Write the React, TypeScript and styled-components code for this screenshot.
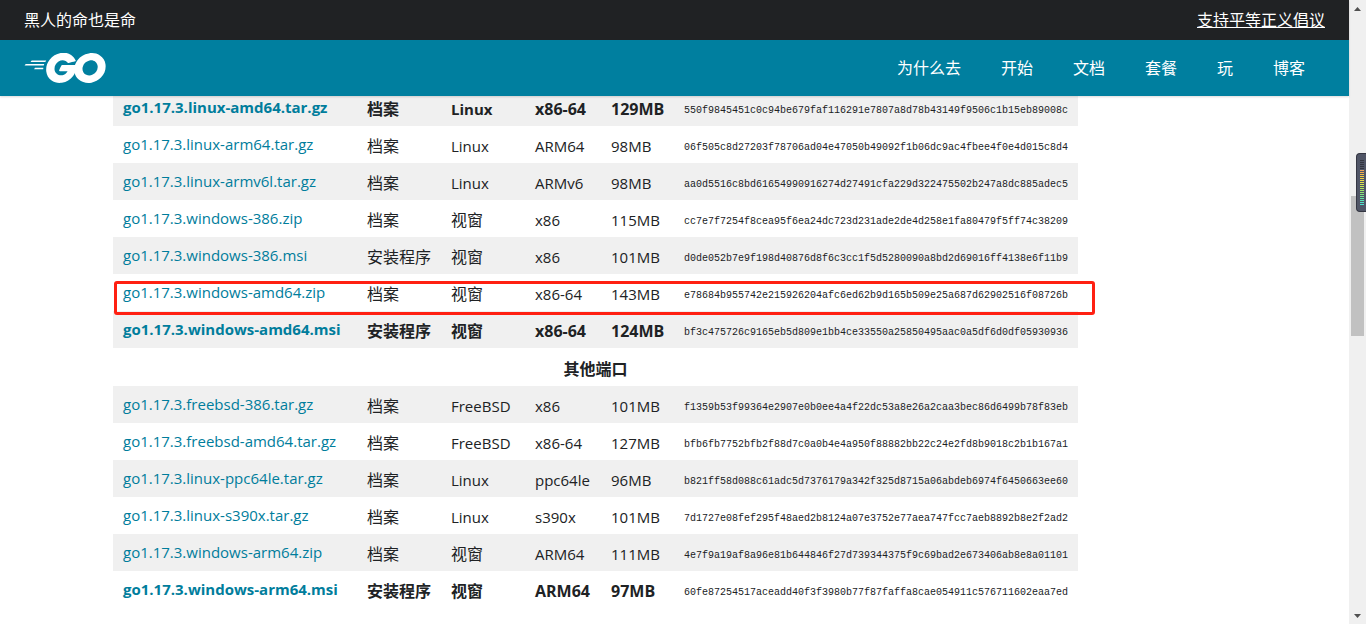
import React from "react";
import styled, { createGlobalStyle } from "styled-components";

const GlobalStyle = createGlobalStyle`
  *, *::before, *::after { box-sizing: border-box; }
  body {
    margin: 0;
    background: #fff;
    color: #202224;
    font: 16px/24px "Open Sans", "Noto Sans CJK SC", sans-serif;
  }
`;

const Shell = styled.div`
  display: flex;
  height: 100vh;
  overflow: hidden;
`;

const Page = styled.div`
  flex: 1;
  min-width: 0;
`;

const Header = styled.header`
  position: relative;
  z-index: 1;
  color: #fff;
  box-shadow: 0 1px 2px rgba(0, 0, 0, 0.15);
`;

const Banner = styled.div`
  display: flex;
  align-items: center;
  justify-content: space-between;
  height: 40px;
  padding: 0 24px;
  background: #202224;
`;

const BannerLink = styled.a`
  color: inherit;
  text-decoration: underline;
`;

const NavBar = styled.nav`
  display: flex;
  align-items: center;
  justify-content: space-between;
  height: 56px;
  padding: 0 24px;
  background: #007f9f;
`;

const HomeLink = styled.a`
  display: flex;
`;

const Menu = styled.ul`
  display: flex;
  margin: 0;
  padding: 0;
  list-style: none;
`;

const MenuLink = styled.a`
  padding: 0 20px;
  color: #fff;
  text-decoration: none;
`;

const Main = styled.main`
  max-width: 1123px;
  margin: 0 auto;
`;

/* Scrolled so that the first visible row is partly under the header. */
const Downloads = styled.table`
  width: 100%;
  max-width: 965px;
  margin-top: -7px;
  border-collapse: collapse;
  table-layout: fixed;
`;

const Col = styled.col<{ $w?: number }>`
  width: ${(p) => (p.$w ? `${p.$w}px` : "auto")};
`;

const Row = styled.tr<{ $striped?: boolean; $strong?: boolean }>`
  position: relative;
  height: 37px;
  background: ${(p) => (p.$striped ? "#f0f0f0" : "#fff")};
  font-weight: ${(p) => (p.$strong ? 700 : 400)};
`;

/* Red frame drawn over the whole row; the row is its containing block. */
const Marker = styled.span`
  position: absolute;
  z-index: 1;
  top: 7px;
  left: 1px;
  right: -17px;
  height: 34px;
  border: 3px solid #ff2012;
  border-radius: 3px;
  pointer-events: none;
`;

const Cell = styled.td<{ $large?: boolean }>`
  padding: 8px 0 5px 10px;
  font-size: ${(p) => (p.$large ? 16 : 15)}px;
  vertical-align: top;
  white-space: nowrap;
`;

const FileCell = styled(Cell)`
  padding: 6px 0 7px 10px;
`;

const FileLink = styled.a`
  color: #007d9c;
  text-decoration: none;
`;

const HashCell = styled(Cell)`
  padding: 10px 0 3px 10px;
  font: 10px/24px "Liberation Mono", monospace;
`;

const GroupHead = styled.th`
  height: 38px;
  padding: 9px 0 5px;
  text-align: center;
`;

const ScrollTrack = styled.aside`
  position: relative;
  display: flex;
  flex-direction: column;
  justify-content: space-between;
  align-items: center;
  width: 17px;
  padding: 7px 0 6px;
  background: #f0f0f0;
`;

const ScrollThumb = styled.div`
  position: absolute;
  top: 196px;
  left: 2px;
  width: 13px;
  height: 140px;
  background: #c1c1c1;
`;

const Meter = styled.div`
  position: absolute;
  top: 153px;
  right: 0;
  display: flex;
  flex-direction: column;
  gap: 1px;
  width: 10px;
  height: 59px;
  padding: 6px 1px 0 3px;
  border: 1px solid #343642;
  border-right: 0;
  border-radius: 4px 0 0 4px;
  background: #505566;
`;

const MeterBar = styled.div<{ $color: string }>`
  width: 4px;
  height: 1px;
  background: ${(p) => p.$color};
`;

const menu = ["为什么去", "开始", "文档", "套餐", "玩", "博客"];

type File = {
  name: string;
  kind: string;
  os: string;
  arch: string;
  size: string;
  hash: string;
  strong?: boolean;
  marked?: boolean;
};

const mainFiles: File[] = [
  { name: "go1.17.3.linux-amd64.tar.gz", kind: "档案", os: "Linux", arch: "x86-64", size: "129MB", hash: "550f9845451c0c94be679faf116291e7807a8d78b43149f9506c1b15eb89008c", strong: true },
  { name: "go1.17.3.linux-arm64.tar.gz", kind: "档案", os: "Linux", arch: "ARM64", size: "98MB", hash: "06f505c8d27203f78706ad04e47050b49092f1b06dc9ac4fbee4f0e4d015c8d4" },
  { name: "go1.17.3.linux-armv6l.tar.gz", kind: "档案", os: "Linux", arch: "ARMv6", size: "98MB", hash: "aa0d5516c8bd61654990916274d27491cfa229d322475502b247a8dc885adec5" },
  { name: "go1.17.3.windows-386.zip", kind: "档案", os: "视窗", arch: "x86", size: "115MB", hash: "cc7e7f7254f8cea95f6ea24dc723d231ade2de4d258e1fa80479f5ff74c38209" },
  { name: "go1.17.3.windows-386.msi", kind: "安装程序", os: "视窗", arch: "x86", size: "101MB", hash: "d0de052b7e9f198d40876d8f6c3cc1f5d5280090a8bd2d69016ff4138e6f11b9" },
  { name: "go1.17.3.windows-amd64.zip", kind: "档案", os: "视窗", arch: "x86-64", size: "143MB", hash: "e78684b955742e215926204afc6ed62b9d165b509e25a687d62902516f08726b", marked: true },
  { name: "go1.17.3.windows-amd64.msi", kind: "安装程序", os: "视窗", arch: "x86-64", size: "124MB", hash: "bf3c475726c9165eb5d809e1bb4ce33550a25850495aac0a5df6d0df05930936", strong: true },
];

const otherFiles: File[] = [
  { name: "go1.17.3.freebsd-386.tar.gz", kind: "档案", os: "FreeBSD", arch: "x86", size: "101MB", hash: "f1359b53f99364e2907e0b0ee4a4f22dc53a8e26a2caa3bec86d6499b78f83eb" },
  { name: "go1.17.3.freebsd-amd64.tar.gz", kind: "档案", os: "FreeBSD", arch: "x86-64", size: "127MB", hash: "bfb6fb7752bfb2f88d7c0a0b4e4a950f88882bb22c24e2fd8b9018c2b1b167a1" },
  { name: "go1.17.3.linux-ppc64le.tar.gz", kind: "档案", os: "Linux", arch: "ppc64le", size: "96MB", hash: "b821ff58d088c61adc5d7376179a342f325d8715a06abdeb6974f6450663ee60" },
  { name: "go1.17.3.linux-s390x.tar.gz", kind: "档案", os: "Linux", arch: "s390x", size: "101MB", hash: "7d1727e08fef295f48aed2b8124a07e3752e77aea747fcc7aeb8892b8e2f2ad2" },
  { name: "go1.17.3.windows-arm64.zip", kind: "档案", os: "视窗", arch: "ARM64", size: "111MB", hash: "4e7f9a19af8a96e81b644846f27d739344375f9c69bad2e673406ab8e8a01101" },
  { name: "go1.17.3.windows-arm64.msi", kind: "安装程序", os: "视窗", arch: "ARM64", size: "97MB", hash: "60fe87254517aceadd40f3f3980b77f87faffa8cae054911c576711602eaa7ed", strong: true },
];

const meterColors = [
  "#33353f", "#33353f", "#33353f", "#33353f", "#33353f",
  "#f0a35a", "#f0ac50", "#f2bd48", "#f2c944", "#f0d444", "#ecdc48",
  "#e2e24c", "#d2e650", "#c2e656", "#b0e65e", "#a0e668", "#92e672",
  "#82e680", "#72e690", "#64e6a2", "#58e4b4", "#50e2c4", "#4ce0d0",
];

const GoLogo = () => (
  <svg width="82" height="30" viewBox="23 78.6 208 76" fill="#fff" role="img" aria-label="Go">
    <path d="M40.2,101.1c-0.4,0-0.5-0.2-0.3-0.5l2.1-2.7c0.2-0.3,0.7-0.5,1.1-0.5l35.7,0c0.4,0,0.5,0.3,0.3,0.6l-1.7,2.6c-0.2,0.3-0.7,0.6-1,0.6L40.2,101.1z" />
    <path d="M25.1,110.3c-0.4,0-0.5-0.2-0.3-0.5l2.1-2.7c0.2-0.3,0.7-0.5,1.1-0.5l45.6,0c0.4,0,0.6,0.3,0.5,0.6l-0.8,2.4c-0.1,0.4-0.5,0.6-0.9,0.6L25.1,110.3z" />
    <path d="M49.3,119.5c-0.4,0-0.5-0.3-0.3-0.6l1.4-2.5c0.2-0.3,0.6-0.6,1-0.6l20,0c0.4,0,0.6,0.3,0.6,0.7l-0.2,2.4c0,0.4-0.4,0.7-0.7,0.7L49.3,119.5z" />
    <path d="M153.1,99.3c-6.3,1.6-10.6,2.8-16.8,4.4c-1.5,0.4-1.6,0.5-2.9-1c-1.5-1.7-2.6-2.8-4.7-3.8c-6.3-3.1-12.4-2.2-18.1,1.5c-6.8,4.4-10.3,10.9-10.2,19c0.1,8,5.6,14.6,13.5,15.7c6.8,0.9,12.5-1.5,17-6.6c0.9-1.1,1.7-2.3,2.7-3.7c-3.6,0-8.1,0-19.3,0c-2.1,0-2.6-1.3-1.9-3c1.3-3.1,3.7-8.3,5.1-10.9c0.3-0.6,1-1.6,2.5-1.6c5.1,0,23.9,0,36.4,0c-0.2,2.7-0.2,5.4-0.6,8.1c-1.1,7.2-3.8,13.8-8.2,19.6c-7.2,9.5-16.6,15.4-28.5,17c-9.8,1.3-18.9-0.6-26.9-6.6c-7.4-5.6-11.6-13-12.7-22.2c-1.3-10.9,1.9-20.7,8.5-29.3c7.1-9.3,16.5-15.2,28-17.3c9.4-1.7,18.4-0.6,26.5,4.9c5.3,3.5,9.1,8.3,11.6,14.1C154.7,98.5,154.3,99,153.1,99.3z" />
    <path d="M186.2,154.6c-9.1-0.2-17.4-2.8-24.4-8.8c-5.9-5.1-9.6-11.6-10.8-19.3c-1.8-11.3,1.3-21.3,8.1-30.2c7.3-9.6,16.1-14.6,28-16.7c10.2-1.8,19.8-0.8,28.5,5.1c7.9,5.4,12.8,12.7,14.1,22.3c1.7,13.5-2.2,24.5-11.5,33.9c-6.6,6.7-14.7,10.9-24,12.8C191.5,154.2,188.8,154.3,186.2,154.6z M210,114.2c-0.1-1.3-0.1-2.3-0.3-3.3c-1.8-9.9-10.9-15.5-20.4-13.3c-9.3,2.1-15.3,8-17.5,17.4c-1.8,7.8,2,15.7,9.2,18.9c5.5,2.4,11,2.1,16.3-0.6C205.2,129.2,209.5,122.9,210,114.2z" />
  </svg>
);

const isLatin = (text: string) => /^[A-Z]/.test(text);

const FileRow = ({ file, striped }: { file: File; striped: boolean }) => (
  <Row $striped={striped} $strong={file.strong}>
    <FileCell>
      <FileLink href={`#${file.name}`}>{file.name}</FileLink>
      {file.marked && <Marker />}
    </FileCell>
    <Cell $large>{file.kind}</Cell>
    <Cell $large={!isLatin(file.os)}>{file.os}</Cell>
    <Cell $large={file.strong}>{file.arch}</Cell>
    <Cell $large={file.strong}>{file.size}</Cell>
    <HashCell>{file.hash}</HashCell>
  </Row>
);

export default function App() {
  return (
    <>
      <GlobalStyle />
      <Shell>
        <Page>
          <Header>
            <Banner>
              <span>黑人的命也是命</span>
              <BannerLink href="#support">支持平等正义倡议</BannerLink>
            </Banner>
            <NavBar>
              <HomeLink href="#home">
                <GoLogo />
              </HomeLink>
              <Menu>
                {menu.map((item) => (
                  <li key={item}>
                    <MenuLink href={`#${item}`}>{item}</MenuLink>
                  </li>
                ))}
              </Menu>
            </NavBar>
          </Header>
          <Main>
            <Downloads>
              <colgroup>
                <Col $w={244} />
                <Col $w={84} />
                <Col $w={84} />
                <Col $w={76} />
                <Col $w={73} />
                <Col />
              </colgroup>
              <tbody>
                {mainFiles.map((file, i) => (
                  <FileRow key={file.name} file={file} striped={i % 2 === 0} />
                ))}
                <Row>
                  <GroupHead colSpan={6}>其他端口</GroupHead>
                </Row>
                {otherFiles.map((file, i) => (
                  <FileRow key={file.name} file={file} striped={i % 2 === 0} />
                ))}
              </tbody>
            </Downloads>
          </Main>
        </Page>
        <ScrollTrack aria-hidden="true">
          <svg width="7" height="4" viewBox="0 0 7 4" fill="#505050">
            <path d="M0 4h7L3.500 0z" />
          </svg>
          <svg width="7" height="4" viewBox="0 0 7 4" fill="#505050">
            <path d="M0 0h7L3.500 4z" />
          </svg>
          <ScrollThumb />
          <Meter>
            {meterColors.map((color, i) => (
              <MeterBar key={i} $color={color} />
            ))}
          </Meter>
        </ScrollTrack>
      </Shell>
    </>
  );
}
